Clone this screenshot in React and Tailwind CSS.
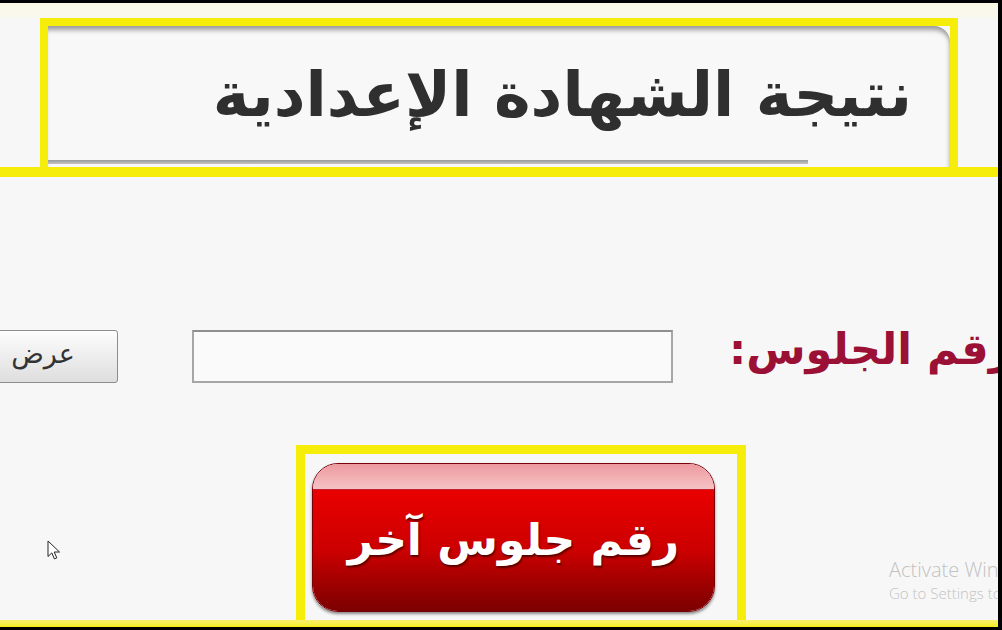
// Exam result lookup page: header card, seat-number form, red "another number" button

const YELLOW = 'border-[#f6ee0a]'

const Cursor = () => (
  <svg width="13" height="20" viewBox="0 0 13 20" aria-hidden="true">
    <path d="M1 1v15.5l3.8-3.6 2.6 6 2.4-1-2.6-5.9H12.5Z" fill="#fff" stroke="#222" strokeWidth="1" strokeLinejoin="round" />
  </svg>
)

function Header() {
  return (
    <div className={`h-[159px] border-b-[10px] ${YELLOW}`}>
      <div className={`ml-[40px] w-[918px] h-[149px] border-x-[8px] border-t-[8px] ${YELLOW}`}>
        <div className="h-full flex flex-col bg-[#f8f8f8] rounded-tr-[16px] shadow-[inset_0_7px_5px_-3px_#9a9a9a,inset_-5px_0_4px_-4px_#c0c0c0]">
          <div className="flex-1 flex items-center justify-end pr-[38px] pt-[4px]">
            <h1
              dir="rtl"
              className="text-[#2f2f2f] text-[62px] font-bold leading-none whitespace-nowrap"
              style={{ fontFamily: '"DejaVu Sans", sans-serif' }}
            >
              نتيجة الشهادة الإعدادية
            </h1>
          </div>
          <div className="h-[4px] w-[760px] mb-[3px] bg-gradient-to-b from-[#9a9a9a] to-[#c4c4c4]" />
        </div>
      </div>
    </div>
  )
}

function SeatForm() {
  return (
    <div className="mt-[153px] h-[53px] flex items-stretch whitespace-nowrap" style={{ fontFamily: '"DejaVu Sans", sans-serif' }}>
      <button className="ml-[-22px] w-[140px] shrink-0 rounded-[3px] border border-[#8c8c8c] bg-gradient-to-b from-[#fdfdfd] to-[#dedede] text-[#333] text-[27px] flex items-center justify-center pr-[10px] pb-[4px]" dir="rtl">
        عرض
      </button>
      <div className="ml-[74px] w-[481px] shrink-0 border-2 border-[#a6a6a6] border-t-[#8e8e8e] bg-[#fafafa]" />
      <label dir="rtl" className="ml-[56px] shrink-0 text-[#9b1035] text-[43px] font-bold leading-none flex items-center pb-[14px]">
        رقم الجلوس:
      </label>
    </div>
  )
}

function AnotherButton() {
  return (
    <div className={`mt-[62px] ml-[296px] w-[450px] h-[175px] border-x-[9px] border-t-[9px] ${YELLOW} pl-[7px] pt-[9px]`}>
      <div className="w-[403px] h-[149px] rounded-[26px] overflow-hidden flex flex-col border border-[#7a0008] shadow-[0_2px_3px_rgba(0,0,0,0.45)]">
        <div className="h-[26px] bg-gradient-to-b from-[#ec9aa0] to-[#f6c2c4] border-b border-[#c22030]" />
        <div className="flex-1 bg-gradient-to-b from-[#ea0000] via-[#cc0000] to-[#7c0000] flex items-center justify-center pb-[22px]">
          <span
            dir="rtl"
            className="text-white text-[44px] font-bold leading-none whitespace-nowrap [text-shadow:1px_2px_2px_rgba(60,0,0,0.8)]"
            style={{ fontFamily: '"DejaVu Sans", sans-serif' }}
          >
            رقم جلوس آخر
          </span>
        </div>
      </div>
    </div>
  )
}

export default function App() {
  return (
    <div className="w-[1002px] h-[630px] bg-black pt-[3px] pr-[4px] overflow-hidden">
      <div className="relative h-[624px] bg-[#f7f7f7] flex flex-col overflow-hidden">
        <div className="h-[15px] bg-gradient-to-b from-[#fbf8e4] to-[#f8f7ef]" />
        <Header />
        <SeatForm />
        <AnotherButton />
        <div className="h-[7px] bg-gradient-to-b from-[#f8f06a] to-[#f6ee0a]" />

        {/* mouse pointer */}
        <div className="absolute left-[47px] top-[537px]">
          <Cursor />
        </div>

        {/* Windows activation watermark */}
        <div className="absolute left-[889px] top-[557px] text-[#c2c2c2] whitespace-nowrap leading-none" style={{ fontFamily: '"Open Sans", sans-serif' }}>
          <div className="text-[20px] font-light">Activate Windows</div>
          <div className="text-[15px] font-light mt-[6px]">Go to Settings to activate Windows.</div>
        </div>
      </div>
    </div>
  )
}
